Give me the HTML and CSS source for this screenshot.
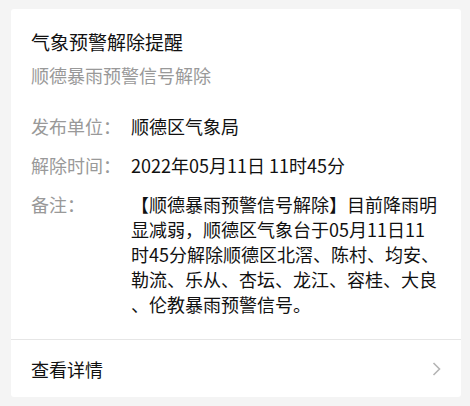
FILE: index.html
```html
<!DOCTYPE html>
<html lang="zh-CN">
<head>
<meta charset="utf-8">
<link rel="stylesheet" href="styles.css">
</head>
<body>
<div class="card">
  <div class="content">
    <div class="title">气象预警解除提醒</div>
    <div class="subtitle">顺德暴雨预警信号解除</div>
    <div class="rows">
      <div class="row">
        <div class="label">发布单位：</div>
        <div class="value">顺德区气象局</div>
      </div>
      <div class="row">
        <div class="label">解除时间：</div>
        <div class="value">2022年05月11日 11时45分</div>
      </div>
      <div class="row">
        <div class="label">备注：</div>
        <div class="value remark">【顺德暴雨预警信号解除】目前降雨明<br>显减弱，顺德区气象台于05月11日11<br>时45分解除顺德区北滘、陈村、均安、<br>勒流、乐从、杏坛、龙江、容桂、大良<br>、伦教暴雨预警信号。</div>
      </div>
    </div>
  </div>
  <div class="footer">
    <span class="more">查看详情</span>
    <svg class="chevron" width="9" height="14" viewBox="0 0 9 14"><polyline points="1.5,1 7.5,7 1.5,13" fill="none" stroke="#b5b5b5" stroke-width="1.6"/></svg>
  </div>
</div>
</body>
</html>
```
FILE: styles.css
```css
html, body {
  margin: 0;
  padding: 0;
  background: #f4f4f4;
}
body {
  padding: 9px 9px 9px 11px;
  font-family: "Noto Sans CJK SC", "Noto Sans", sans-serif;
}
.card {
  background: #fff;
  border-radius: 3px;
  width: 450px;
  height: 388px;
  display: flex;
  flex-direction: column;
  box-sizing: border-box;
}
.content {
  padding: 20px 20px 0 20px;
  flex: 1;
}
.title {
  font-size: 19px;
  line-height: 26px;
  color: #111;
}
.subtitle {
  margin-top: 7px;
  font-size: 18px;
  line-height: 26px;
  color: #999;
}
.rows {
  margin-top: 26px;
  display: flex;
  flex-direction: column;
  gap: 14px;
}
.row {
  display: flex;
  font-size: 18px;
  line-height: 25px;
}
.label {
  width: 100px;
  flex: none;
  color: #999;
}
.value {
  color: #111;
  white-space: nowrap;
}
.footer {
  border-top: 1px solid #e6e6e6;
  height: 57px;
  padding: 0 20px;
  display: flex;
  align-items: center;
  justify-content: space-between;
}
.more {
  font-size: 18px;
  color: #111;
}
.chevron {
  display: block;
}
```
